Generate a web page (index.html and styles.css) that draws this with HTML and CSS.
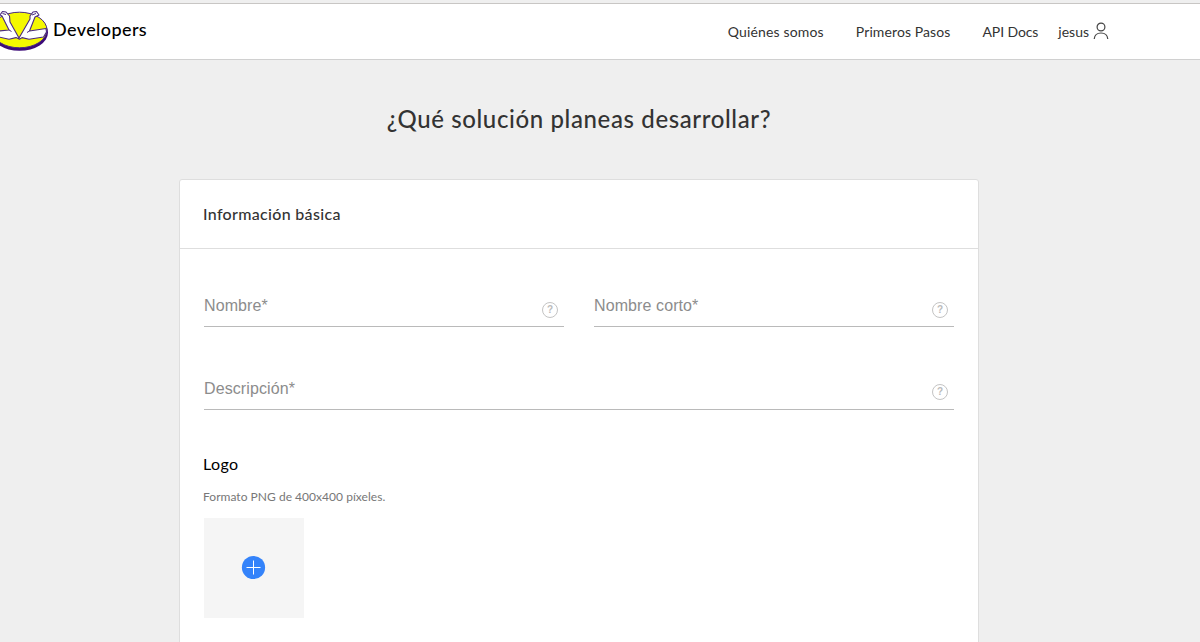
FILE: index.html
```html
<!DOCTYPE html>
<html lang="es">
<head>
<meta charset="utf-8">
<title>Developers</title>
<link rel="stylesheet" href="styles.css">
</head>
<body>
<header class="topbar">
  <a class="brand">
    <svg class="brand-logo" width="48" height="44" viewBox="0 8 48 44">
      <ellipse cx="19.5" cy="32.5" rx="28.5" ry="18.3" fill="#3c0a78"/>
      <ellipse cx="19.5" cy="30" rx="27.5" ry="17.8" fill="#f4f800" stroke="#4a2a80" stroke-width="1"/>
      <path d="M-1 31 L9 30 L2 16 L0 15 L2.500 11.500 L6 12 L9.500 16 L10 22 L19 38 L30 19 L30 16 L33 12 L36.500 11.500 L39 15 L35 17 L29.500 31 L46 28.500 L46.500 32 L43.500 37 L29 39.200 L22 37.600 L19.500 39.300 L16 37.600 L9 39.200 L-1 37Z" fill="#fff" stroke="#4a2a80" stroke-width="1.100" stroke-linejoin="round"/>
      <path d="M9 30 L11.500 31.500 M29.500 31 L27 32.500 M2.500 13.500 L6 14.500 M36 13.500 L32 15" fill="none" stroke="#4a2a80" stroke-width="1"/>
    </svg>
    <span class="brand-name">Developers</span>
  </a>
  <nav class="nav">
    <a class="nav-about">Quiénes somos</a>
    <a class="nav-start">Primeros Pasos</a>
    <a class="nav-docs">API Docs</a>
    <a class="user"><span class="user-name">jesus</span>
      <svg class="user-icon" width="16" height="18" viewBox="0 0 16 18" fill="none" stroke="#444" stroke-width="1.200"><circle cx="8" cy="5" r="3.900"/><path d="M1.200 17C1.600 12.800 4.500 11 8 11s6.400 1.800 6.800 6"/></svg>
    </a>
  </nav>
</header>
<main class="page">
  <h1 class="title"><span>¿Qué solución planeas desarrollar?</span></h1>
  <section class="card">
    <h2 class="card-head"><span>Información básica</span></h2>
    <div class="card-body">
      <div class="row">
        <label class="field"><span class="label">Nombre*</span><span class="help">?</span></label>
        <label class="field"><span class="label">Nombre corto*</span><span class="help">?</span></label>
      </div>
      <div class="row row-wide">
        <label class="field"><span class="label">Descripción*</span><span class="help">?</span></label>
      </div>
      <h3 class="logo-title"><span>Logo</span></h3>
      <p class="logo-hint"><span>Formato PNG de 400x400 píxeles.</span></p>
      <div class="upload">
        <svg width="25" height="25" viewBox="0 0 25 25"><circle cx="12.500" cy="12.500" r="11.600" fill="#3483fa"/><path d="M12.500 5.500v14M5.500 12.500h14" stroke="#fff" stroke-width="1"/></svg>
      </div>
    </div>
  </section>
</main>
</body>
</html>
```
FILE: styles.css
```css
* { box-sizing: border-box; }
body { margin: 0; height: 642px; overflow: hidden; background: #efefef; color: #333; font-family: Lato, "Open Sans", sans-serif; }
h1, h2, h3, p { margin: 0; font-weight: 500; }
.topbar { display: flex; justify-content: space-between; height: 57px; margin-top: 3px; background: #fff; border-top: 1px solid #c8c6c4; border-bottom: 1px solid #d0d0d0; }
.brand { display: flex; gap: 5px; padding-top: 4px; }
.brand-logo { display: block; }
.brand-name { font-size: 18px; line-height: 24px; margin-top: 9px; font-weight: 500; color: #000; letter-spacing: .4px; }
.nav { display: flex; align-items: flex-start; padding-top: 18px; padding-right: 91px; font-size: 14px; line-height: 20px; white-space: nowrap; }
.nav-about, .nav-start { margin-right: 32px; }
.nav-about { letter-spacing: .15px; }
.nav-start { letter-spacing: .1px; }
.nav-docs { margin-right: 20px; letter-spacing: -.1px; }
.user { display: flex; gap: 4px; }
.user-icon { display: block; }
.title { padding-top: 41px; height: 120px; width: 1158px; text-align: center; font-size: 24px; line-height: 36px; letter-spacing: .62px; }
.card { width: 800px; height: 480px; margin-left: 179px; margin-top: -1px; background: #fff; border: 1px solid #dedede; border-radius: 3px; }
.card-head { height: 69px; padding: 22px 24px 0 23px; border-bottom: 1px solid #dedede; font-size: 16px; line-height: 24px; letter-spacing: .32px; }
.card-body { padding: 36px 24px 0; }
.row { display: grid; grid-template-columns: 360px 360px; gap: 30px; }
.row-wide { grid-template-columns: 750px; margin-top: 40px; }
.field { display: flex; justify-content: space-between; height: 42px; padding: 9px 6px 0 0; border-bottom: 1px solid #bababa; }
.row-wide .field { height: 43px; padding-top: 10px; }
.label { font: 16px/24px "Liberation Sans", Arial, sans-serif; letter-spacing: .1px; color: #8c8c8c; }
.help { width: 16px; height: 16px; margin-top: 8px; border: 1px solid #c4c4c4; border-radius: 50%; font: 700 10px/14px "Liberation Sans", Arial, sans-serif; text-align: center; color: #bbb; }
.row-wide .help { margin-top: 7px; }
.logo-title { margin-top: 42px; margin-left: -1px; font-size: 16px; line-height: 24px; font-weight: 400; letter-spacing: .4px; color: #000; }
.logo-hint { margin-top: 11px; margin-left: -1px; font-size: 12px; line-height: 20px; font-weight: 400; letter-spacing: .03px; color: #777; }
.upload { display: flex; width: 100px; height: 100px; margin-top: 11px; padding: 37px 0 0 37px; background: #f5f5f5; }
```
